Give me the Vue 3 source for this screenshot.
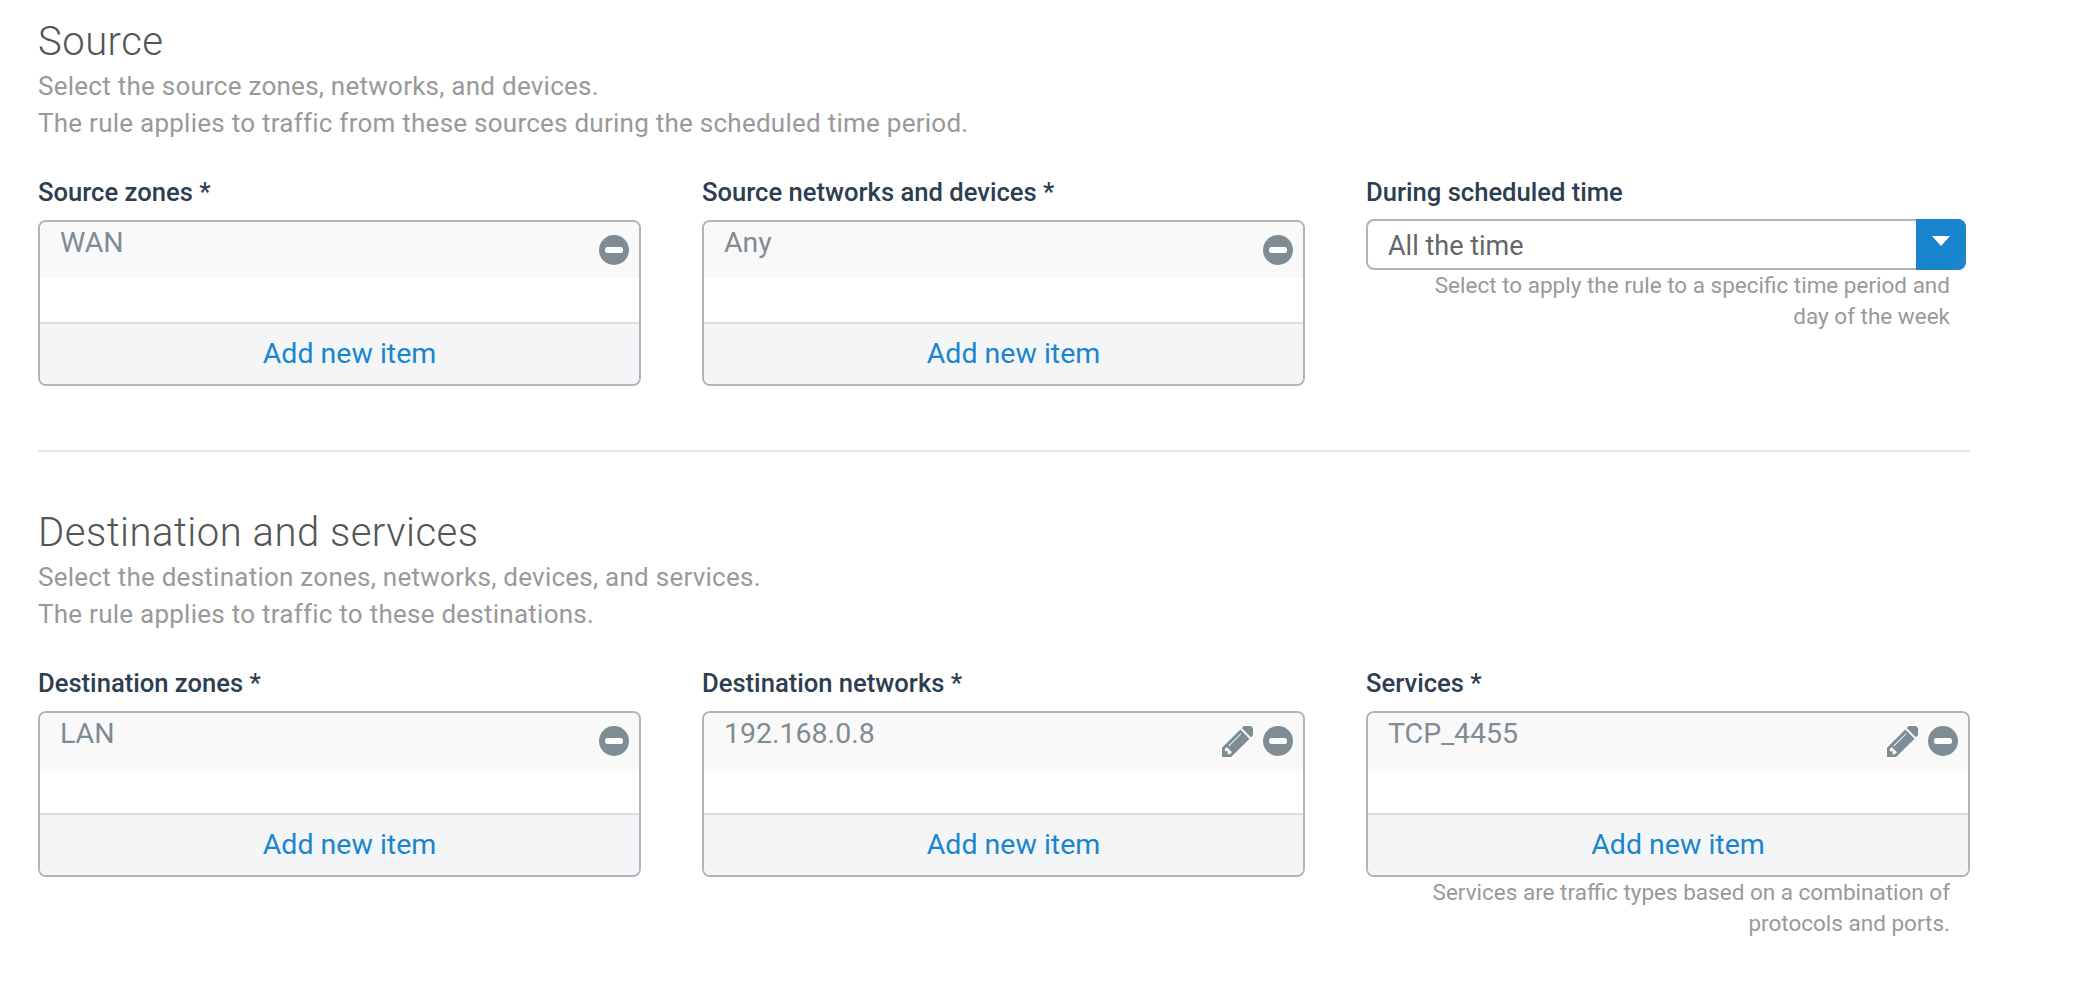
<script setup>
const sections = [
  {
    title: 'Source',
    desc: ['Select the source zones, networks, and devices.', 'The rule applies to traffic from these sources during the scheduled time period.'],
    fields: [
      { label: 'Source zones *', item: 'WAN' },
      { label: 'Source networks and devices *', item: 'Any' },
      { label: 'During scheduled time', select: 'All the time', hint: ['Select to apply the rule to a specific time period and', 'day of the week'] }
    ]
  },
  {
    title: 'Destination and services',
    desc: ['Select the destination zones, networks, devices, and services.', 'The rule applies to traffic to these destinations.'],
    fields: [
      { label: 'Destination zones *', item: 'LAN' },
      { label: 'Destination networks *', item: '192.168.0.8', edit: true },
      { label: 'Services *', item: 'TCP_4455', edit: true, hint: ['Services are traffic types based on a combination of', 'protocols and ports.'] }
    ]
  }
]
</script>

<template>
  <div class="page">
    <section v-for="(s, i) in sections" :key="s.title" class="section" :class="{ ruled: i === 0 }">
      <h2 class="title">{{ s.title }}</h2>
      <p v-for="d in s.desc" :key="d" class="desc">{{ d }}</p>
      <div class="fields">
        <div v-for="f in s.fields" :key="f.label" class="field">
          <div class="label">{{ f.label }}</div>
          <div v-if="f.select" class="select">
            <span class="select-text">{{ f.select }}</span>
            <span class="select-btn"><span class="caret"></span></span>
          </div>
          <div v-else class="list">
            <div class="row">
              <span class="item">{{ f.item }}</span>
              <span class="actions">
                <svg v-if="f.edit" class="pencil" viewBox="0 0 1408 1408" aria-hidden="true">
                  <path d="M363 1280l91-91-235-235-91 91v107h128v128h107zm523-928q0-22-22-22-10 0-17 7l-542 542q-7 7-7 17 0 22 22 22 10 0 17-7l542-542q7-7 7-17zm-54-192l416 416-832 832h-416v-416zm683 96q0 53-37 90l-166 166-416-416 166-165q36-38 90-38 53 0 91 38l235 234q37 39 37 91z" />
                </svg>
                <svg class="minus" viewBox="0 0 30 30" aria-hidden="true">
                  <circle cx="15" cy="15" r="15" />
                  <rect x="6" y="12" width="18" height="6" rx="2.5" />
                </svg>
              </span>
            </div>
            <div class="blank"></div>
            <div class="add">Add new item</div>
          </div>
          <div v-if="f.hint" class="hint">
            <div v-for="h in f.hint" :key="h">{{ h }}</div>
          </div>
        </div>
      </div>
    </section>
  </div>
</template>

<style scoped>
.page {
  box-sizing: border-box;
  width: 2094px;
  height: 996px;
  padding: 19px 0 0 38px;
  background: #fff;
  font-family: Roboto, "Liberation Sans", sans-serif;
  overflow: hidden;
}
.section { width: 1932px; }
.ruled {
  height: 431px;
  border-bottom: 2px solid #e4e5e7;
  margin-bottom: 58px;
}
.title {
  margin: 0 0 3px;
  font-size: 40px;
  letter-spacing: 0.5px;
  line-height: 46px;
  font-weight: 300;
  color: #555;
}
.desc {
  margin: 0;
  font-size: 26px;
  letter-spacing: 0.25px;
  line-height: 37px;
  color: #999;
}
.fields {
  display: flex;
  gap: 61px;
  margin-top: 33px;
}
.field { width: 603px; }
.field:last-child { width: 604px; }
.label {
  font-size: 25.6px;
  line-height: 34px;
  font-weight: 500;
  color: #2c3e50;
  margin-bottom: 11px;
}
.list {
  box-sizing: border-box;
  height: 166px;
  border: 2px solid #aeb4ba;
  border-radius: 8px;
  overflow: hidden;
  display: flex;
  flex-direction: column;
}
.row {
  height: 56px;
  background: #f9f9f9;
  display: flex;
  justify-content: space-between;
  padding: 0 10px 0 20px;
}
.item {
  font-size: 28.5px;
  line-height: 42px;
  color: #7f8c94;
}
.actions {
  display: flex;
  align-items: center;
  gap: 10px;
  height: 56px;
}
.pencil { width: 31px; height: 31px; fill: #7f8c94; }
.minus { width: 30px; height: 30px; }
.minus circle { fill: #7f8c94; }
.minus rect { fill: #fff; }
.blank { height: 44px; }
.add {
  flex: 1;
  background: #f4f5f7;
  border-top: 2px solid #dcdde0;
  padding-left: 20px;
  text-align: center;
  font-size: 28.5px;
  line-height: 60px;
  color: #1a85cf;
}
.select {
  box-sizing: border-box;
  width: 600px;
  height: 51px;
  margin-top: -1px;
  border: 2px solid #aeb4ba;
  border-radius: 8px;
  display: flex;
  justify-content: space-between;
}
.select-text {
  padding-left: 20px;
  font-size: 27px;
  line-height: 50px;
  color: #666;
}
.select-btn {
  width: 50px;
  margin: -2px;
  border-radius: 0 8px 8px 0;
  background: #1a85cf;
  display: flex;
  justify-content: center;
  padding-top: 17px;
  box-sizing: border-box;
}
.caret {
  width: 0;
  height: 0;
  border-left: 9px solid transparent;
  border-right: 9px solid transparent;
  border-top: 10px solid #fff;
}
.hint {
  padding-right: 20px;
  text-align: right;
  font-size: 22.5px;
  line-height: 31px;
  color: #999;
}
</style>
